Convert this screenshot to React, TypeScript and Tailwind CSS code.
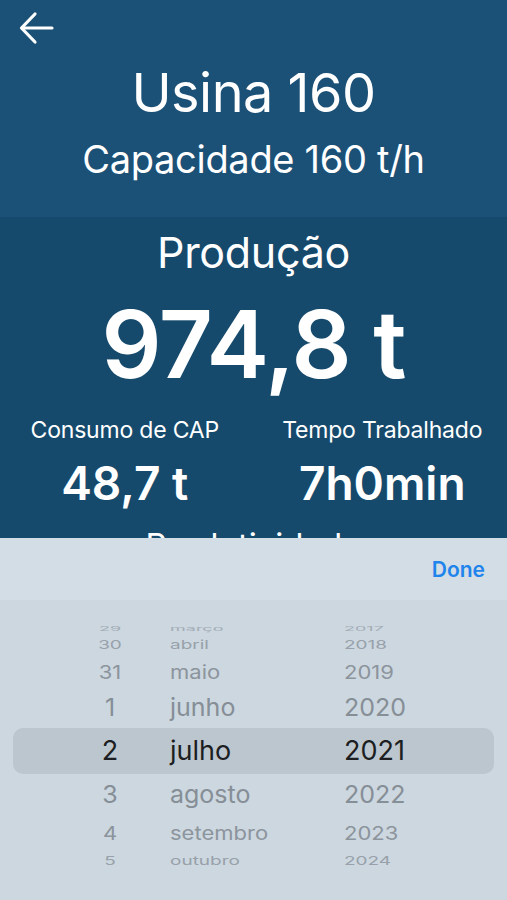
import React from "react";

const font = { fontFamily: "Inter, 'Noto Sans', sans-serif" };

function Arrow() {
  return (
    <svg width="38" height="38" viewBox="0 0 38 38" fill="none" stroke="white" strokeWidth="3.2" strokeLinecap="round" strokeLinejoin="round">
      <path d="M34 19H4" />
      <path d="M17 5L3.5 19L17 33" />
    </svg>
  );
}

type Row = { d: string; m: string; y: string; h: string; t: string; sel?: boolean };

const rows: Row[] = [
  { d: "29", m: "março", y: "2017", h: "h-[12px]", t: "text-[18px] scale-y-[0.35] text-[#a3acb5]" },
  { d: "30", m: "abril", y: "2018", h: "h-[22px]", t: "text-[19px] scale-y-[0.65] text-[#98a1aa]" },
  { d: "31", m: "maio", y: "2019", h: "h-[32px]", t: "text-[22px] scale-y-[0.85] text-[#8c949c]" },
  { d: "1", m: "junho", y: "2020", h: "h-[40px]", t: "text-[25px] scale-y-[0.97] text-[#868e96]" },
  { d: "2", m: "julho", y: "2021", h: "h-[46px]", t: "text-[27px] text-[#1c1e21]", sel: true },
  { d: "3", m: "agosto", y: "2022", h: "h-[42px]", t: "text-[25px] scale-y-[0.97] text-[#868e96]" },
  { d: "4", m: "setembro", y: "2023", h: "h-[34px]", t: "text-[22px] scale-y-[0.85] text-[#8c949c]" },
  { d: "5", m: "outubro", y: "2024", h: "h-[22px]", t: "text-[19px] scale-y-[0.65] text-[#98a1aa]" },
  { d: "6", m: "novembro", y: "2025", h: "h-[12px]", t: "text-[18px] scale-y-[0.35] text-[#a3acb5]" },
];

export default function App() {
  return (
    <div className="relative w-[507px] h-[900px] overflow-hidden bg-[#164a6c] text-white" style={font}>
      <header className="h-[217px] bg-[#1b5077] flex flex-col items-center">
        <div className="self-start pl-[18px] pt-[9px] h-[60px]">
          <Arrow />
        </div>
        <h1 className="text-[54px] leading-[66px] font-normal tracking-[-0.5px]">Usina 160</h1>
        <p className="text-[38px] leading-[48px] mt-[9px] tracking-[-0.3px]">Capacidade 160 t/h</p>
      </header>
      <main className="flex flex-col items-center">
        <h2 className="text-[43px] leading-[54px] mt-[8px] tracking-[-0.3px]">Produção</h2>
        <div className="text-[94px] leading-[110px] font-semibold mt-[10px] tracking-[-1px]">974,8 t</div>
        <div className="grid grid-cols-2 w-full mt-[16px]">
          <div className="flex flex-col items-center pr-[4px]">
            <span className="text-[23px] leading-[30px] tracking-[-0.2px]">Consumo de CAP</span>
            <span className="text-[46px] leading-[56px] font-semibold mt-[10px]">48,7 t</span>
          </div>
          <div className="flex flex-col items-center pl-[4px]">
            <span className="text-[23px] leading-[30px] tracking-[-0.2px]">Tempo Trabalhado</span>
            <span className="text-[46px] leading-[56px] font-semibold mt-[10px]">7h0min</span>
          </div>
        </div>
        <div className="text-[33px] leading-[44px] mt-[12px]">Produtividade</div>
      </main>

      <div className="absolute left-0 right-0 top-[538px] bottom-0 bg-[#ccd7e0] flex flex-col">
        <div className="h-[62px] bg-[#d3dde5] flex items-center justify-end pr-[22px] pt-[2px]">
          <span className="text-[21px] font-semibold text-[#1f84ec]">Done</span>
        </div>
        <div className="mt-[24px] h-[248px] overflow-hidden">
          <div className="flex flex-col mt-[-2px]">
            {rows.map((r, i) => (
              <div key={i} className={`flex items-center mx-[13px] ${r.h} ${r.sel ? "rounded-[10px] bg-[#bcc6cf]" : ""}`}>
                <div className={`flex items-center w-full ${r.t}`}>
                  <span className="w-[112px] text-right">
                    <span className="inline-block w-[30px] text-center">{r.d}</span>
                  </span>
                  <span className="ml-[45px] w-[173px]">{r.m}</span>
                  <span className="ml-[1px]">{r.y}</span>
                </div>
              </div>
            ))}
          </div>
        </div>
      </div>
    </div>
  );
}
